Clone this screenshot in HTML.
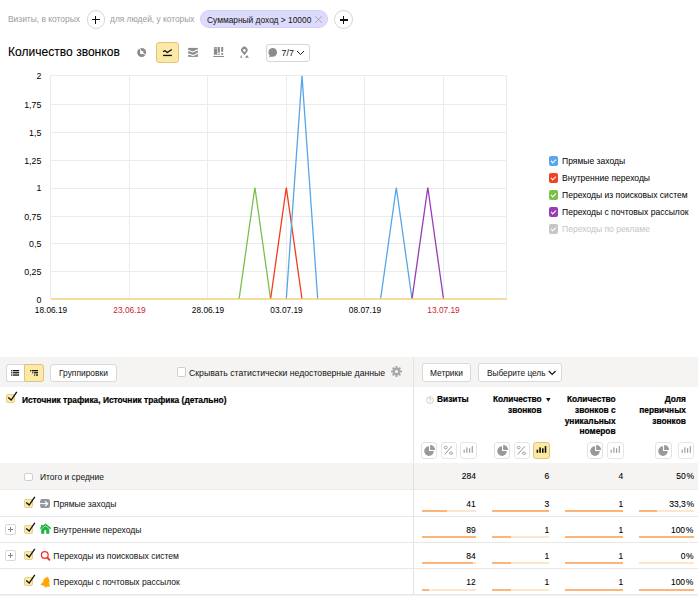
<!DOCTYPE html>
<html><head><meta charset="utf-8">
<style>
*{box-sizing:border-box;margin:0;padding:0}
html,body{width:698px;height:596px;overflow:hidden;background:#fff}
body{position:relative;font-family:"Liberation Sans",sans-serif;color:#222}
.a{position:absolute;white-space:nowrap;line-height:1}
.t{font-size:8.5px}
.circ{position:absolute;border:1px solid #d6d6d6;border-radius:50%;background:#fff}
.circ:before,.circ:after{content:"";position:absolute;background:#111;left:50%;top:50%}
.circ:before{width:8px;height:1.4px;margin:-0.7px 0 0 -4px}
.circ:after{width:1.4px;height:8px;margin:-4px 0 0 -0.7px}
.btn{position:absolute;border:1px solid #d9d9d9;border-radius:3px;background:#fff}
.ylab{position:absolute;font-size:8.8px;line-height:1;text-align:right;width:30px;left:11.3px;color:#000;margin-top:0.2px}
.xlab{position:absolute;font-size:8.3px;line-height:1;width:40px;text-align:center;color:#000;top:306px}
.leg{position:absolute;left:549px;font-size:9.2px;line-height:1;color:#000}
.leg i{position:absolute;left:0;top:0.3px;width:9.2px;height:9.3px;border-radius:2px}
.leg span{position:absolute;left:12.5px;top:1.3px;white-space:nowrap;transform:scaleX(0.93);transform-origin:0 0}
.leg i:after{content:"";position:absolute;left:2.2px;top:2.6px;width:4.2px;height:2.2px;border-left:1.2px solid #fff;border-bottom:1.2px solid #fff;transform:rotate(-45deg)}
</style></head><body>

<!-- top filter row -->
<div class="a" style="left:8px;top:14.7px;font-size:9.3px;transform:scaleX(0.905);transform-origin:0 0;color:#9a9ca2">Визиты, в которых</div>
<div class="circ" style="left:86.5px;top:10.3px;width:18.5px;height:18.5px"></div>
<div class="a" style="left:110.3px;top:14.7px;font-size:9.3px;transform:scaleX(0.9);transform-origin:0 0;color:#9a9ca2">для людей, у которых</div>
<div style="position:absolute;left:200px;top:10.2px;width:128.4px;height:17.5px;border-radius:9px;background:#dcdbfb;border:1px solid #d2d0f6"></div>
<div class="a" style="left:206.9px;top:15.1px;font-size:9.4px;transform:scaleX(0.893);transform-origin:0 0;color:#111">Суммарный доход &gt; 10000</div>
<svg class="a" style="left:314px;top:15px" width="9" height="9" viewBox="0 0 9 9"><path d="M1.2 1.2 L7.8 7.8 M7.8 1.2 L1.2 7.8" stroke="#9b9bab" stroke-width="0.9"/></svg>
<div class="circ" style="left:334px;top:10.3px;width:19px;height:19px"></div>

<!-- chart title + toolbar -->
<div class="a" style="left:8.1px;top:45.9px;font-size:12.05px;color:#000;-webkit-text-stroke:0.1px #000">Количество звонков</div>

<!-- pie icon -->
<svg class="a" style="left:136px;top:47px" width="12" height="12" viewBox="136 47 12 12">
  <path fill-rule="evenodd" fill="#8c8c8c" d="M146.2 52.5 A4.5 4.5 0 1 1 137.2 52.5 A4.5 4.5 0 1 1 146.2 52.5 Z M143.5 52.5 A1.8 1.8 0 1 0 139.9 52.5 A1.8 1.8 0 1 0 143.5 52.5 Z"/>
  <path d="M141.7 52.5 L139.4 47.6 M141.7 52.5 L146.3 55.3" stroke="#fff" stroke-width="1"/>
</svg>
<!-- line (active) -->
<div style="position:absolute;left:156.3px;top:42px;width:22.6px;height:20.8px;border-radius:3px;background:#fde9a6;border:1px solid #dfc67e"></div>
<svg class="a" style="left:161px;top:47px" width="13" height="11" viewBox="0 0 13 11">
  <path d="M2.1 4.6 L3.9 3.7 L6.3 5.5 L10.8 2.5" stroke="#111" stroke-width="1.35" fill="none"/>
  <rect x="2.1" y="7.8" width="8.8" height="1.3" fill="#111"/>
</svg>
<!-- stacked icon -->
<svg class="a" style="left:186px;top:46px" width="14" height="13" viewBox="186 46 14 13">
  <rect x="188.2" y="47.9" width="9.7" height="9" fill="#8c8c8c"/>
  <path d="M187.8 50.6 C190 50 191 51.9 192.9 51.9 C194.6 51.9 196 50.2 198.3 49.6 M187.8 54.4 C189.8 53.2 191 55.4 193 55.4 C194.6 55.4 196 53.6 198.3 53.1" stroke="#fff" stroke-width="1.15" fill="none"/>
</svg>
<!-- bars icon -->
<svg class="a" style="left:212px;top:46px" width="13" height="12" viewBox="212 46 13 12">
  <rect x="213.9" y="47" width="3.5" height="7.75" fill="#8c8c8c"/>
  <rect x="213.9" y="47.6" width="3.5" height="1.2" fill="#b9b9b9"/>
  <rect x="218" y="47" width="1.9" height="5.6" fill="#8c8c8c"/>
  <rect x="218" y="53.7" width="1.9" height="1.05" fill="#8c8c8c"/>
  <rect x="221.2" y="47" width="2" height="4.8" fill="#8c8c8c"/>
  <rect x="221.2" y="53" width="2" height="1.75" fill="#8c8c8c"/>
  <rect x="213.2" y="56" width="10.8" height="1" fill="#8c8c8c"/>
</svg>
<!-- map pin -->
<svg class="a" style="left:238px;top:46px" width="13" height="13" viewBox="238 46 13 13">
  <path fill-rule="evenodd" fill="#8c8c8c" d="M244.35 55.3 L242 52.3 A3.25 3.25 0 1 1 246.7 52.3 Z M245.7 50.45 A1.35 1.35 0 1 0 243 50.45 A1.35 1.35 0 1 0 245.7 50.45 Z"/>
  <path d="M240 57.7 L241.4 55 L242.2 57.7 Z M244.9 57.7 L247 55 L248.9 57.7 Z" fill="#8c8c8c"/>
</svg>
<!-- 7/7 button -->
<div class="btn" style="left:265.5px;top:44.4px;width:44.5px;height:17.2px;border-color:#d6d6d6"></div>
<svg class="a" style="left:266px;top:47px" width="12" height="12" viewBox="266 47 12 12">
  <circle cx="272.7" cy="52.4" r="4.3" fill="#8c8c8c"/>
  <path d="M270 55.3 L269 57.6 L272.3 56.2 Z" fill="#8c8c8c"/>
</svg>
<div class="a" style="left:281.5px;top:48.6px;font-size:8.9px;color:#111">7/7</div>
<svg class="a" style="left:295.5px;top:50px" width="9" height="6" viewBox="0 0 9 6">
  <path d="M1 1 L4.5 4.5 L8 1" stroke="#222" stroke-width="1" fill="none"/>
</svg>

<!-- chart -->
<svg class="a" style="left:0;top:0" width="698" height="340" viewBox="0 0 698 340">
  <g stroke="#ebebeb" stroke-width="1" shape-rendering="crispEdges">
    <line x1="50" y1="75.5" x2="507" y2="75.5"/>
    <line x1="50" y1="104.5" x2="507" y2="104.5"/>
    <line x1="50" y1="132.5" x2="507" y2="132.5"/>
    <line x1="50" y1="160.5" x2="507" y2="160.5"/>
    <line x1="50" y1="188.5" x2="507" y2="188.5"/>
    <line x1="50" y1="216.5" x2="507" y2="216.5"/>
    <line x1="50" y1="243.5" x2="507" y2="243.5"/>
    <line x1="50" y1="271.5" x2="507" y2="271.5"/>
    <line x1="50.5" y1="75" x2="50.5" y2="299"/>
    <line x1="129.5" y1="75" x2="129.5" y2="299"/>
    <line x1="207.5" y1="75" x2="207.5" y2="299"/>
    <line x1="286.5" y1="75" x2="286.5" y2="299"/>
    <line x1="364.5" y1="75" x2="364.5" y2="299"/>
    <line x1="443.5" y1="75" x2="443.5" y2="299"/>
    <line x1="506.5" y1="75" x2="506.5" y2="299"/>
  </g>
  <g fill="none" stroke-width="1.3" stroke-linejoin="miter">
    <polyline stroke="#7cbf45" points="239.1,299 254.9,187.5 270.6,299"/>
    <polyline stroke="#f43b1e" points="270.6,299 286.3,187.5 302,299"/>
    <polyline stroke="#56a5e6" points="286.3,299 302,75.8 317.7,299"/>
    <polyline stroke="#56a5e6" points="380.6,299 396.3,187.5 412,299"/>
    <polyline stroke="#973cb4" points="412,299 427.8,187.5 443.5,299"/>
  </g>
  <line x1="51" y1="299" x2="507" y2="299" stroke="#f2cf7c" stroke-width="1.6"/>
</svg>
<div class="ylab" style="top:72.2px">2</div>
<div class="ylab" style="top:100.5px">1,75</div>
<div class="ylab" style="top:128.5px">1,5</div>
<div class="ylab" style="top:156.5px">1,25</div>
<div class="ylab" style="top:184.3px">1</div>
<div class="ylab" style="top:212.5px">0,75</div>
<div class="ylab" style="top:240px">0,5</div>
<div class="ylab" style="top:268px">0,25</div>
<div class="ylab" style="top:295.8px">0</div>
<div class="xlab" style="left:31px">18.06.19</div>
<div class="xlab" style="left:109.5px;color:#c81c34">23.06.19</div>
<div class="xlab" style="left:188px">28.06.19</div>
<div class="xlab" style="left:266.5px">03.07.19</div>
<div class="xlab" style="left:345px">08.07.19</div>
<div class="xlab" style="left:423.5px;color:#c81c34">13.07.19</div>

<!-- legend -->
<div class="leg" style="top:156px"><i style="background:#5aa7e8"></i><span>Прямые заходы</span></div>
<div class="leg" style="top:173px"><i style="background:#f4401f"></i><span>Внутренние переходы</span></div>
<div class="leg" style="top:190px"><i style="background:#7cc04a"></i><span>Переходы из поисковых систем</span></div>
<div class="leg" style="top:207px"><i style="background:#983db5"></i><span>Переходы с почтовых рассылок</span></div>
<div class="leg" style="top:224px;color:#c4c4c4"><i style="background:#c6c6c6"></i><span>Переходы по рекламе</span></div>

<!-- TABLE -->

<style>
.tb{position:absolute;font-size:8.5px;line-height:1;white-space:nowrap}
.hd{position:absolute;font-size:8.35px;font-weight:bold;line-height:10.8px;text-align:right;color:#000;-webkit-text-stroke:0.2px #000}
.ib{position:absolute;top:442px;width:16.5px;height:16.5px;border:1px solid #e6e6e6;border-radius:3px;background:#fff}
.cb{position:absolute;width:9px;height:8.5px;border-radius:2px;background:#fbe9a4;border:1px solid #e4d08a}
.cbw{position:absolute;width:9px;height:8.5px;border-radius:2px;background:#fff;border:1px solid #cfcfcf}
.ck{position:absolute}
.num{position:absolute;font-size:9.6px;line-height:1;text-align:right;color:#000;white-space:nowrap;-webkit-text-stroke:0.1px #000;transform:scaleX(0.885);transform-origin:100% 0}
.bar{position:absolute;height:2px;background:#fde5d0}
.bar b{position:absolute;left:0;top:0;height:2px;background:#fbb57a}
.pl{position:absolute;left:5.3px;width:10.6px;height:10.4px;border:1px solid #d9d9d9;border-radius:2px;background:#fff}
.pl:before,.pl:after{content:"";position:absolute;background:#888;left:50%;top:50%}
.pl:before{width:5px;height:1px;margin:-0.5px 0 0 -2.5px}
.pl:after{width:1px;height:5px;margin:-2.5px 0 0 -0.5px}
.rl{position:absolute;left:0;width:698px;height:1px;background:#e8e8e8}
</style>
<!-- toolbar band -->
<div style="position:absolute;left:0;top:357px;width:698px;height:30px;background:#f5f4f2"></div>
<div style="position:absolute;left:413px;top:357px;width:1px;height:239px;background:#e4e4e4"></div>
<div style="position:absolute;left:0;top:594.5px;width:698px;height:2px;background:#f2f2f2"></div>
<!-- segmented -->
<div style="position:absolute;left:5.5px;top:363.8px;width:18.8px;height:18px;border:1px solid #d9d9d9;border-right:none;border-radius:3px 0 0 3px;background:#fff"></div>
<div style="position:absolute;left:24.1px;top:363.8px;width:19.6px;height:18px;border:1px solid #dcc57e;border-radius:0 3px 3px 0;background:#fde9a6"></div>
<svg style="position:absolute;left:11px;top:370px" width="9" height="7" viewBox="0 0 9 7">
 <g fill="#111"><rect x="0" y="0" width="0.9" height="1.3"/><rect x="1.6" y="0" width="6.5" height="1.3"/>
 <rect x="0" y="2.1" width="0.9" height="1.3"/><rect x="1.6" y="2.1" width="6.5" height="1.3"/>
 <rect x="0" y="4.4" width="0.9" height="1.3"/><rect x="1.6" y="4.4" width="6.5" height="1.3"/></g>
</svg>
<svg style="position:absolute;left:30px;top:370px" width="9" height="7" viewBox="0 0 9 7">
 <g fill="#111"><rect x="0" y="0" width="0.9" height="1.3"/><rect x="1.6" y="0" width="6.4" height="1.3"/>
 <rect x="2.2" y="2.1" width="0.9" height="1.3"/><rect x="3.8" y="2.1" width="4.2" height="1.3"/>
 <rect x="4.1" y="4.4" width="0.9" height="1.3"/><rect x="5.8" y="4.4" width="2.2" height="1.3"/></g>
</svg>
<div style="position:absolute;left:50.1px;top:363.7px;width:66.6px;height:18px;border:1px solid #d9d9d9;border-radius:3px;background:#fff"></div>
<div class="tb" style="left:59.2px;top:368.1px;font-size:9.4px;transform:scaleX(0.897);transform-origin:0 0;color:#111">Группировки</div>
<div class="cbw" style="left:176.9px;top:367.4px;height:9.2px"></div>
<div class="tb" style="left:189.3px;top:367.5px;font-size:9.4px;transform:scaleX(0.926);transform-origin:0 0;color:#111">Скрывать статистически недостоверные данные</div>
<svg style="position:absolute;left:390.5px;top:366px" width="11" height="11" viewBox="0 0 11 11">
 <g fill="#a9a9a9"><circle cx="5.5" cy="5.5" r="3.9"/>
 <rect x="4.5" y="0" width="2" height="11"/><rect x="0" y="4.5" width="11" height="2"/>
 <rect x="4.5" y="0" width="2" height="11" transform="rotate(45 5.5 5.5)"/><rect x="0" y="4.5" width="11" height="2" transform="rotate(45 5.5 5.5)"/></g>
 <circle cx="5.5" cy="5.5" r="1.6" fill="#f5f4f2"/>
</svg>
<div style="position:absolute;left:421.9px;top:363.4px;width:49.5px;height:18.2px;border:1px solid #d9d9d9;border-radius:3px;background:#fff"></div>
<div class="tb" style="left:430.4px;top:368.5px;font-size:9.3px;transform:scaleX(0.896);transform-origin:0 0;color:#111">Метрики</div>
<div style="position:absolute;left:478.4px;top:363.4px;width:83.8px;height:18.2px;border:1px solid #d9d9d9;border-radius:3px;background:#fff"></div>
<div class="tb" style="left:486.6px;top:368.5px;font-size:9.3px;transform:scaleX(0.887);transform-origin:0 0;color:#111">Выберите цель</div>
<svg style="position:absolute;left:548px;top:370px" width="9" height="6" viewBox="0 0 9 6"><path d="M0.8 1 L4.2 4.4 L7.6 1" stroke="#111" stroke-width="1.2" fill="none"/></svg>

<!-- header -->
<div class="cb" style="left:6.2px;top:394.3px"></div>
<svg class="ck" style="left:6px;top:389.5px" width="13" height="12" viewBox="0 0 13 12"><path d="M2.2 7.5 L5.2 10.1 L10.8 1.9" stroke="#111" stroke-width="1.35" fill="none"/></svg>
<div class="tb" style="left:21.9px;top:395.7px;font-size:8.39px;font-weight:bold;color:#000;-webkit-text-stroke:0.2px #000">Источник трафика, Источник трафика (детально)</div>

<svg style="position:absolute;left:425.8px;top:396.3px" width="8" height="8" viewBox="0 0 8 8"><circle cx="4" cy="4" r="3.4" stroke="#c8c8c8" stroke-width="0.9" fill="none"/><text x="4" y="6" font-size="5" text-anchor="middle" fill="#aaa" font-family="Liberation Sans">?</text></svg>
<div class="hd" style="right:229.3px;top:394px">Визиты</div>
<div class="hd" style="right:156.4px;top:394px">Количество<br>звонков</div>
<svg style="position:absolute;left:546.2px;top:398px" width="5" height="4" viewBox="0 0 5 4"><path d="M0 0 H4.6 L2.3 3.8 Z" fill="#111"/></svg>
<div class="hd" style="right:82.4px;top:394px">Количество<br>звонков с<br>уникальных<br>номеров</div>
<div class="hd" style="right:12.1px;top:394px">Доля<br>первичных<br>звонков</div>

<div class="ib" style="left:420.7px;top:442px;border-color:#e2e2e2"></div><svg style="position:absolute;left:420.7px;top:442px" width="17" height="17" viewBox="0 0 17 17"><path d="M8 4.3 A4.8 4.8 0 1 0 12.8 9.1 L8 9.1 Z" fill="#999"/><path d="M9.1 3 A5 5 0 0 1 14.1 8 L9.1 8 Z" fill="#999"/></svg>
<div class="ib" style="left:441.3px;top:442px;width:15.5px"></div><svg style="position:absolute;left:441.3px;top:442px" width="16" height="17" viewBox="0 0 16 17"><ellipse cx="4.7" cy="5.5" rx="1.5" ry="1.2" stroke="#8a8a8a" stroke-width="0.75" fill="none"/><ellipse cx="10" cy="11.2" rx="1.5" ry="1.2" stroke="#8a8a8a" stroke-width="0.75" fill="none"/><path d="M10.9 4.2 L3.8 12.4" stroke="#8a8a8a" stroke-width="0.9"/></svg>
<div class="ib" style="left:460.2px;top:442px;"></div><svg style="position:absolute;left:460.2px;top:442px" width="17" height="17" viewBox="0 0 17 17"><rect x="3.6" y="7.7" width="1.15" height="3.1000000000000005" fill="#9a9a9a"/><rect x="6.3" y="5.4" width="1.15" height="5.4" fill="#9a9a9a"/><rect x="9.0" y="6.3" width="1.15" height="4.500000000000001" fill="#9a9a9a"/><rect x="11.7" y="4.1" width="1.15" height="6.700000000000001" fill="#9a9a9a"/></svg>
<div class="ib" style="left:493.6px;top:442px;border-color:#e2e2e2"></div><svg style="position:absolute;left:493.6px;top:442px" width="17" height="17" viewBox="0 0 17 17"><path d="M8 4.3 A4.8 4.8 0 1 0 12.8 9.1 L8 9.1 Z" fill="#999"/><path d="M9.1 3 A5 5 0 0 1 14.1 8 L9.1 8 Z" fill="#999"/></svg>
<div class="ib" style="left:514px;top:442px;width:15.5px"></div><svg style="position:absolute;left:514px;top:442px" width="16" height="17" viewBox="0 0 16 17"><ellipse cx="4.7" cy="5.5" rx="1.5" ry="1.2" stroke="#8a8a8a" stroke-width="0.75" fill="none"/><ellipse cx="10" cy="11.2" rx="1.5" ry="1.2" stroke="#8a8a8a" stroke-width="0.75" fill="none"/><path d="M10.9 4.2 L3.8 12.4" stroke="#8a8a8a" stroke-width="0.9"/></svg>
<div class="ib" style="left:533px;top:442px;background:#fde9a6;border-color:#dcc57e;"></div><svg style="position:absolute;left:533px;top:442px" width="17" height="17" viewBox="0 0 17 17"><rect x="3.6" y="7.7" width="1.6" height="3.1000000000000005" fill="#111"/><rect x="6.3" y="5.4" width="1.6" height="5.4" fill="#111"/><rect x="9.0" y="6.3" width="1.6" height="4.500000000000001" fill="#111"/><rect x="11.7" y="4.1" width="1.6" height="6.700000000000001" fill="#111"/></svg>
<div class="ib" style="left:586.5px;top:442px;border-color:#e2e2e2"></div><svg style="position:absolute;left:586.5px;top:442px" width="17" height="17" viewBox="0 0 17 17"><path d="M8 4.3 A4.8 4.8 0 1 0 12.8 9.1 L8 9.1 Z" fill="#999"/><path d="M9.1 3 A5 5 0 0 1 14.1 8 L9.1 8 Z" fill="#999"/></svg>
<div class="ib" style="left:607.3px;top:442px;"></div><svg style="position:absolute;left:607.3px;top:442px" width="17" height="17" viewBox="0 0 17 17"><rect x="3.6" y="7.7" width="1.15" height="3.1000000000000005" fill="#9a9a9a"/><rect x="6.3" y="5.4" width="1.15" height="5.4" fill="#9a9a9a"/><rect x="9.0" y="6.3" width="1.15" height="4.500000000000001" fill="#9a9a9a"/><rect x="11.7" y="4.1" width="1.15" height="6.700000000000001" fill="#9a9a9a"/></svg>
<div class="ib" style="left:655.4px;top:442px;border-color:#e2e2e2"></div><svg style="position:absolute;left:655.4px;top:442px" width="17" height="17" viewBox="0 0 17 17"><path d="M8 4.3 A4.8 4.8 0 1 0 12.8 9.1 L8 9.1 Z" fill="#999"/><path d="M9.1 3 A5 5 0 0 1 14.1 8 L9.1 8 Z" fill="#999"/></svg>
<div class="ib" style="left:677.5px;top:442px;"></div><svg style="position:absolute;left:677.5px;top:442px" width="17" height="17" viewBox="0 0 17 17"><rect x="3.6" y="7.7" width="1.15" height="3.1000000000000005" fill="#9a9a9a"/><rect x="6.3" y="5.4" width="1.15" height="5.4" fill="#9a9a9a"/><rect x="9.0" y="6.3" width="1.15" height="4.500000000000001" fill="#9a9a9a"/><rect x="11.7" y="4.1" width="1.15" height="6.700000000000001" fill="#9a9a9a"/></svg>
<div style="position:absolute;left:0;top:463.3px;width:698px;height:26.4px;background:#f5f4f2;border-bottom:1px solid #ecebea"></div>
<div style="position:absolute;left:413px;top:463.5px;width:1px;height:26.5px;background:#e2e2e2"></div>
<div class="cbw" style="left:23.5px;top:472.5px"></div>
<div class="tb" style="left:40px;top:473.1px;font-size:8.45px;color:#111">Итого и средние</div>
<div class="num" style="right:222.0px;top:470.8px">284</div>
<div class="num" style="right:149px;top:470.8px">6</div>
<div class="num" style="right:75px;top:470.8px">4</div>
<div class="num" style="right:4.3px;top:470.8px">50<span style="margin-left:0.8px">%</span></div>
<div class="rl" style="top:516.3px"></div>
<div class="cb" style="left:23.9px;top:499.3px"></div>
<svg class="ck" style="left:23.5px;top:494.5px" width="13" height="12" viewBox="0 0 13 12"><path d="M2.2 7.5 L5.2 10.1 L10.8 1.9" stroke="#111" stroke-width="1.35" fill="none"/></svg>
<svg style="position:absolute;left:38px;top:497px" width="14" height="13" viewBox="38 497 14 13"><rect x="40.1" y="499" width="9.9" height="9.1" rx="2.2" fill="#8f969e"/><path d="M40.1 503.6 H47.3" stroke="#fff" stroke-width="1.1"/><path d="M45.05 501.2 L47.7 503.65 L45.05 506.1" stroke="#fff" stroke-width="1.2" fill="none"/></svg>
<div class="tb" style="left:53.3px;top:499.5px;font-size:8.55px;color:#111">Прямые заходы</div>
<div class="num" style="right:222.0px;top:499.4px">41</div>
<div class="bar" style="left:421.5px;top:509.9px;width:54.5px"><b style="width:25.1px"></b></div>
<div class="num" style="right:149px;top:499.4px">3</div>
<div class="bar" style="left:492.1px;top:509.9px;width:56.9px"><b style="width:56.9px"></b></div>
<div class="num" style="right:75px;top:499.4px">1</div>
<div class="bar" style="left:564.8px;top:509.9px;width:58.2px"><b style="width:58.2px"></b></div>
<div class="num" style="right:4.3px;top:499.4px">33,3<span style="margin-left:0.8px">%</span></div>
<div class="bar" style="left:638.9px;top:509.9px;width:54.8px"><b style="width:18.3px"></b></div>
<div class="rl" style="top:542.3px"></div>
<div class="pl" style="top:524.3px"></div>
<div class="cb" style="left:23.9px;top:525.3px"></div>
<svg class="ck" style="left:23.5px;top:520.5px" width="13" height="12" viewBox="0 0 13 12"><path d="M2.2 7.5 L5.2 10.1 L10.8 1.9" stroke="#111" stroke-width="1.35" fill="none"/></svg>
<svg style="position:absolute;left:38px;top:522px" width="15" height="14" viewBox="38 522 15 14"><path d="M40.3 528.6 L45.5 524.4 L50.8 528.6" stroke="#1fb43e" stroke-width="1.5" fill="none" stroke-linejoin="miter"/><rect x="41" y="524.9" width="1.7" height="1.9" fill="#1fb43e"/><path d="M41.2 529.2 L45.5 525.9 L49.3 529 L49.3 533.8 L46.2 533.8 L46.2 530.2 L44.3 530.2 L44.3 533.8 L41.2 533.8 Z" fill="#1fb43e"/></svg>
<div class="tb" style="left:53.3px;top:525.5px;font-size:8.55px;color:#111">Внутренние переходы</div>
<div class="num" style="right:222.0px;top:525.4px">89</div>
<div class="bar" style="left:421.5px;top:536.2px;width:54.5px"><b style="width:54.5px"></b></div>
<div class="num" style="right:149px;top:525.4px">1</div>
<div class="bar" style="left:492.1px;top:536.2px;width:56.9px"><b style="width:19.0px"></b></div>
<div class="num" style="right:75px;top:525.4px">1</div>
<div class="bar" style="left:564.8px;top:536.2px;width:58.2px"><b style="width:58.2px"></b></div>
<div class="num" style="right:4.3px;top:525.4px">100<span style="margin-left:0.8px">%</span></div>
<div class="bar" style="left:638.9px;top:536.2px;width:54.8px"><b style="width:54.8px"></b></div>
<div class="rl" style="top:568.3px"></div>
<div class="pl" style="top:550.3px"></div>
<div class="cb" style="left:23.9px;top:551.3px"></div>
<svg class="ck" style="left:23.5px;top:546.5px" width="13" height="12" viewBox="0 0 13 12"><path d="M2.2 7.5 L5.2 10.1 L10.8 1.9" stroke="#111" stroke-width="1.35" fill="none"/></svg>
<svg style="position:absolute;left:38px;top:548px" width="14" height="14" viewBox="38 548 14 14"><circle cx="44.8" cy="554.9" r="3.35" stroke="#ff2d2d" stroke-width="1.3" fill="none"/><path d="M47.3 557.5 L49.9 560.3" stroke="#ff2d2d" stroke-width="1.9"/></svg>
<div class="tb" style="left:53.3px;top:551.5px;font-size:8.55px;color:#111">Переходы из поисковых систем</div>
<div class="num" style="right:222.0px;top:551.4px">84</div>
<div class="bar" style="left:421.5px;top:562.4px;width:54.5px"><b style="width:51.4px"></b></div>
<div class="num" style="right:149px;top:551.4px">1</div>
<div class="bar" style="left:492.1px;top:562.4px;width:56.9px"><b style="width:19.0px"></b></div>
<div class="num" style="right:75px;top:551.4px">1</div>
<div class="bar" style="left:564.8px;top:562.4px;width:58.2px"><b style="width:58.2px"></b></div>
<div class="num" style="right:4.3px;top:551.4px">0<span style="margin-left:0.8px">%</span></div>
<div class="bar" style="left:638.9px;top:562.4px;width:54.8px"><b style="width:0.0px"></b></div>
<div class="rl" style="top:594.3px"></div>
<div class="cb" style="left:23.9px;top:577.3px"></div>
<svg class="ck" style="left:23.5px;top:572.5px" width="13" height="12" viewBox="0 0 13 12"><path d="M2.2 7.5 L5.2 10.1 L10.8 1.9" stroke="#111" stroke-width="1.35" fill="none"/></svg>
<svg style="position:absolute;left:38px;top:574px" width="14" height="15" viewBox="38 574 14 15"><path d="M47.6 576.9 L44.1 579.1 L43.2 582.3 L40.7 584.6 L44.2 585.7 L45.6 587.4 L47.2 586.3 L49.7 586.5 L48.9 584 L49.3 580.2 Z" fill="#ffa600" stroke="#ffa600" stroke-width="0.5" stroke-linejoin="round"/></svg>
<div class="tb" style="left:53.3px;top:577.5px;font-size:8.55px;color:#111">Переходы с почтовых рассылок</div>
<div class="num" style="right:222.0px;top:577.4px">12</div>
<div class="bar" style="left:421.5px;top:588.7px;width:54.5px"><b style="width:7.3px"></b></div>
<div class="num" style="right:149px;top:577.4px">1</div>
<div class="bar" style="left:492.1px;top:588.7px;width:56.9px"><b style="width:19.0px"></b></div>
<div class="num" style="right:75px;top:577.4px">1</div>
<div class="bar" style="left:564.8px;top:588.7px;width:58.2px"><b style="width:58.2px"></b></div>
<div class="num" style="right:4.3px;top:577.4px">100<span style="margin-left:0.8px">%</span></div>
<div class="bar" style="left:638.9px;top:588.7px;width:54.8px"><b style="width:54.8px"></b></div>
</body></html>
